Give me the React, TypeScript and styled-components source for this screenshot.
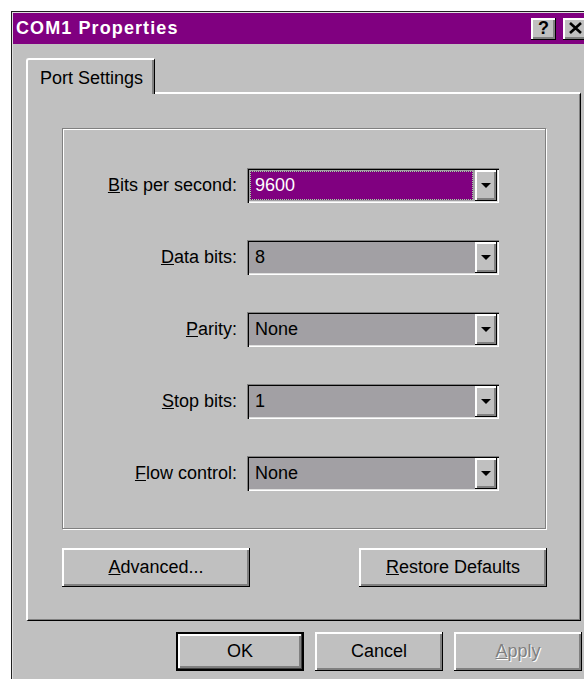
import React from "react";
import styled, { createGlobalStyle, css } from "styled-components";

const GlobalStyle = createGlobalStyle`
  html, body {
    margin: 0;
    padding: 0;
    background: #fff;
    overflow: hidden;
  }
  body {
    font-family: "Liberation Sans", Arial, sans-serif;
    font-size: 18px;
    color: #000;
  }
`;

const raised = css`
  background: #c0c0c0;
  box-shadow: inset -1px -1px #000, inset 2px 2px #fff, inset -3px -3px #808080;
`;

const sunken = css`
  box-shadow: inset 1px 1px #808080, inset 2px 2px #000, inset -1px -1px #fff,
    inset -2px -2px #dfdfdf;
`;

interface Field {
  label: string;
  key: string;
  value: string;
  focused?: boolean;
}

const fields: Field[] = [
  { label: "its per second:", key: "B", value: "9600", focused: true },
  { label: "ata bits:", key: "D", value: "8" },
  { label: "arity:", key: "P", value: "None" },
  { label: "top bits:", key: "S", value: "1" },
  { label: "low control:", key: "F", value: "None" },
];

const DropArrow = () => (
  <svg width="10" height="5" viewBox="0 0 10 5">
    <polygon points="0,0 10,0 5,5" fill="#000" />
  </svg>
);

const CloseGlyph = () => (
  <svg width="13" height="12" viewBox="0 0 13 12">
    <path d="M1 1 L12 11 M12 1 L1 11" stroke="#000" strokeWidth="2.6" />
  </svg>
);

export default function App() {
  return (
    <>
      <GlobalStyle />
      <Window>
        <TitleBar>
          <Title>COM1 Properties</Title>
          <CaptionButtons>
            <CaptionButton>?</CaptionButton>
            <CaptionButton>
              <CloseGlyph />
            </CaptionButton>
          </CaptionButtons>
        </TitleBar>
        <Body>
          <TabStrip>
            <Tab>Port Settings</Tab>
          </TabStrip>
          <Panel>
            <GroupBox>
              {fields.map((f) => (
                <Row key={f.key}>
                  <Label>
                    <u>{f.key}</u>
                    {f.label}
                  </Label>
                  <Combo>
                    <ComboValue $focused={f.focused}>{f.value}</ComboValue>
                    <ComboButton>
                      <DropArrow />
                    </ComboButton>
                  </Combo>
                </Row>
              ))}
            </GroupBox>
            <PanelButtons>
              <WideButton>
                <u>A</u>dvanced...
              </WideButton>
              <WideButton>
                <u>R</u>estore Defaults
              </WideButton>
            </PanelButtons>
          </Panel>
          <Footer>
            <DialogButton $default>OK</DialogButton>
            <DialogButton>Cancel</DialogButton>
            <DialogButton $disabled>
              <u>A</u>pply
            </DialogButton>
          </Footer>
        </Body>
      </Window>
    </>
  );
}

const Window = styled.div`
  margin: 11px 0 0 11px;
  width: 577px;
  height: 680px;
  background: #c0c0c0;
  border-top: 1px solid #202020;
  border-left: 1px solid #202020;
  padding: 1px 1px 0 1px;
  box-shadow: inset 1px 1px #dfdfdf;
`;

const TitleBar = styled.div`
  height: 31px;
  background: #800080;
  display: flex;
  align-items: center;
  justify-content: space-between;
  padding: 0 2px 0 3px;
`;

const Title = styled.span`
  color: #fff;
  font-weight: bold;
  font-size: 18px;
  letter-spacing: 1.1px;
`;

const CaptionButtons = styled.div`
  display: flex;
  gap: 7px;
`;

const CaptionButton = styled.div`
  ${raised};
  width: 25px;
  height: 22px;
  display: flex;
  align-items: center;
  justify-content: center;
  font-weight: bold;
  font-size: 18px;
  box-sizing: border-box;
  padding-bottom: 1px;
`;

const Body = styled.div`
  padding: 14px 9px 0 13px;
`;

const TabStrip = styled.div`
  display: flex;
  height: 34px;
`;

const Tab = styled.div`
  position: relative;
  z-index: 1;
  width: 129px;
  height: 36px;
  box-sizing: border-box;
  background: #c0c0c0;
  border-top: 2px solid #fff;
  border-left: 2px solid #fff;
  border-right: 1px solid #000;
  border-top-left-radius: 3px;
  box-shadow: inset -2px 0 #808080;
  padding: 8px 0 0 12px;
`;

const Panel = styled.div`
  width: 555px;
  height: 529px;
  box-sizing: border-box;
  border-top: 2px solid #fff;
  border-left: 2px solid #fff;
  border-right: 1px solid #000;
  border-bottom: 1px solid #000;
  box-shadow: inset -1px -1px #808080;
  padding: 34px 0 0 34px;
`;

const GroupBox = styled.div`
  width: 484px;
  height: 401px;
  box-sizing: border-box;
  border: 1px solid #808080;
  box-shadow: inset 1px 1px #fff, 1px 1px #fff;
  padding-top: 39px;
  display: flex;
  flex-direction: column;
  gap: 37px;
`;

const Row = styled.div`
  display: grid;
  grid-template-columns: 174px 252px;
  column-gap: 10px;
  align-items: center;
`;

const Label = styled.span`
  text-align: right;
  white-space: nowrap;
`;

const Combo = styled.div`
  ${sunken};
  height: 35px;
  box-sizing: border-box;
  padding: 2px;
  display: flex;
  background: #a2a0a4;
`;

const ComboValue = styled.div<{ $focused?: boolean }>`
  flex: 1;
  display: flex;
  align-items: center;
  padding-left: 5px;
  margin: 1px 2px 1px 1px;
  ${(p) =>
    p.$focused &&
    css`
      background: #800080;
      color: #fff;
      outline: 1px dotted #9fdc9f;
      outline-offset: -1px;
    `}
`;

const ComboButton = styled.div`
  ${raised};
  width: 22px;
  display: flex;
  align-items: center;
  justify-content: center;
`;

const PanelButtons = styled.div`
  width: 485px;
  margin-top: 19px;
  display: flex;
  justify-content: space-between;
`;

const buttonBase = css`
  ${raised};
  height: 39px;
  box-sizing: border-box;
  display: flex;
  align-items: center;
  justify-content: center;
`;

const WideButton = styled.div`
  ${buttonBase};
  width: 188px;
`;

const Footer = styled.div`
  width: 556px;
  margin-top: 11px;
  display: flex;
  justify-content: flex-end;
  gap: 11px;
`;

const DialogButton = styled.div<{ $default?: boolean; $disabled?: boolean }>`
  ${buttonBase};
  width: 128px;
  ${(p) =>
    p.$default &&
    css`
      border: 2px solid #000;
      box-shadow: inset -1px -1px #404040, inset 2px 2px #fff,
        inset -3px -3px #808080;
    `}
  ${(p) =>
    p.$disabled &&
    css`
      color: #808080;
      text-shadow: 1px 1px #fff;
    `}
`;
